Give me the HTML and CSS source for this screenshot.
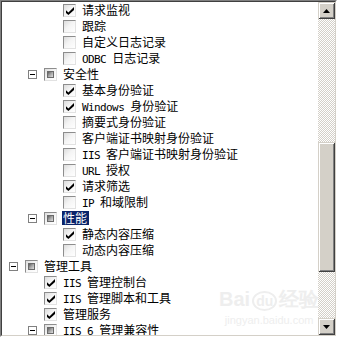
FILE: index.html
```html
<!DOCTYPE html>
<html>
	<head>
		<meta charset="UTF-8">
		<title>角色服务</title>
		<link rel="stylesheet" href="styles.css">
	</head>
	<body>
		<div class="frame">
			<div class="inner">
				<div class="list">
					<div class="row l3"><span class="slot"></span><span class="box on"></span><span class="txt">请求监视</span></div>
					<div class="row l3"><span class="slot"></span><span class="box"></span><span class="txt">跟踪</span></div>
					<div class="row l3"><span class="slot"></span><span class="box"></span><span class="txt">自定义日志记录</span></div>
					<div class="row l3"><span class="slot"></span><span class="box"></span><span class="txt"><span class="en">ODBC </span>日志记录</span></div>
					<div class="row l2"><span class="slot exp"></span><span class="box part"></span><span class="txt">安全性</span></div>
					<div class="row l3"><span class="slot"></span><span class="box on"></span><span class="txt">基本身份验证</span></div>
					<div class="row l3"><span class="slot"></span><span class="box on"></span><span class="txt"><span class="en">Windows </span>身份验证</span></div>
					<div class="row l3"><span class="slot"></span><span class="box"></span><span class="txt">摘要式身份验证</span></div>
					<div class="row l3"><span class="slot"></span><span class="box"></span><span class="txt">客户端证书映射身份验证</span></div>
					<div class="row l3"><span class="slot"></span><span class="box"></span><span class="txt"><span class="en">IIS </span>客户端证书映射身份验证</span></div>
					<div class="row l3"><span class="slot"></span><span class="box"></span><span class="txt"><span class="en">URL </span>授权</span></div>
					<div class="row l3"><span class="slot"></span><span class="box on"></span><span class="txt">请求筛选</span></div>
					<div class="row l3"><span class="slot"></span><span class="box"></span><span class="txt"><span class="en">IP </span>和域限制</span></div>
					<div class="row l2"><span class="slot exp"></span><span class="box part"></span><span class="txt sel">性能</span></div>
					<div class="row l3"><span class="slot"></span><span class="box on"></span><span class="txt">静态内容压缩</span></div>
					<div class="row l3"><span class="slot"></span><span class="box"></span><span class="txt">动态内容压缩</span></div>
					<div class="row"><span class="slot exp"></span><span class="box part"></span><span class="txt">管理工具</span></div>
					<div class="row l2"><span class="slot"></span><span class="box on"></span><span class="txt"><span class="en">IIS </span>管理控制台</span></div>
					<div class="row l2"><span class="slot"></span><span class="box on"></span><span class="txt"><span class="en">IIS </span>管理脚本和工具</span></div>
					<div class="row l2"><span class="slot"></span><span class="box on"></span><span class="txt">管理服务</span></div>
					<div class="row l2"><span class="slot exp"></span><span class="box part"></span><span class="txt"><span class="en">IIS 6 </span>管理兼容性</span></div>
				</div>
				<div class="sb">
					<div class="btn"><svg width="7" height="4" viewBox="0 0 7 4"><polygon points="3.5,0 7,4 0,4" fill="#000"/></svg></div>
					<div class="track"><div class="thumb"></div></div>
					<div class="btn"><svg width="7" height="4" viewBox="0 0 7 4"><polygon points="0,0 7,0 3.5,4" fill="#000"/></svg></div>
				</div>
			</div>
			<div class="mark">
				<div class="mark-logo">Bai<span class="mark-du">du</span>经验</div>
				<div class="mark-url">jingyan.baidu.com</div>
			</div>
		</div>
	</body>
</html>
```

FILE: styles.css
```css
*{
	margin: 0;
	padding: 0;
}
body{
	background: #fff;
	font-family: "Noto Sans CJK SC", sans-serif;
	font-size: 12px;
	color: #000;
}
.frame{
	width: 337px;
	height: 337px;
	box-sizing: border-box;
	border: 1px solid;
	border-color: #808080 #fff #fff #808080;
	position: relative;
	overflow: hidden;
}
.inner{
	height: 100%;
	box-sizing: border-box;
	border: 1px solid;
	border-color: #404040 #d4d0c8 #d4d0c8 #404040;
	display: flex;
	background: #fff;
}
.list{
	flex: 1;
	overflow: hidden;
}
/* 一行 */
.row{
	display: flex;
	align-items: flex-start;
	height: 16px;
	white-space: nowrap;
}
.l2{
	padding-left: 19px;
}
.l3{
	padding-left: 38px;
}
/* 展开按钮位置 */
.slot{
	flex: none;
	width: 9px;
	height: 9px;
	margin: 4px 7px 0 7px;
	box-sizing: border-box;
}
.exp{
	border: 1px solid #808080;
	background: #fff;
	position: relative;
}
.exp::after{
	content: "";
	position: absolute;
	left: 1px;
	top: 3px;
	width: 5px;
	height: 1px;
	background: #000;
}
/* 复选框 */
.box{
	flex: none;
	width: 13px;
	height: 13px;
	margin: 2px 6px 0 0;
	box-sizing: border-box;
	border: 1px solid;
	border-color: #8d8d8d #e2e2e2 #e2e2e2 #8d8d8d;
	background: linear-gradient(135deg, #dcdcdc 0%, #f4f4f4 45%, #fff 100%);
	position: relative;
}
.on::after{
	content: "";
	position: absolute;
	left: 2px;
	top: 2px;
	width: 8px;
	height: 8px;
	background: #000;
	clip-path: polygon(0 40%, 30% 68%, 100% 0, 100% 38%, 30% 100%, 0 76%);
}
.part::after{
	content: "";
	position: absolute;
	left: 2px;
	top: 2px;
	width: 7px;
	height: 7px;
	box-sizing: border-box;
	border: 1px solid #6a6a6a;
	background: linear-gradient(135deg, #5e5e5e 0%, #a8a8a8 50%, #e0e0e0 100%);
}
.txt{
	line-height: 16px;
}
.en{
	font-family: "DejaVu Sans Mono", monospace;
	font-size: 11px;
	letter-spacing: -0.6px;
}
.sel{
	background: #0a246a;
	color: #fff;
	line-height: 14px;
	margin: 1px 0 0 -1px;
	padding: 0 2px 0 1px;
}
/* 滚动条 */
.sb{
	flex: none;
	width: 17px;
	display: flex;
	flex-direction: column;
}
.btn, .thumb{
	background: #d4d0c8;
	box-shadow: inset 1px 1px #d4d0c8, inset -1px -1px #404040, inset 2px 2px #fff, inset -2px -2px #808080;
}
.btn{
	flex: none;
	height: 17px;
	display: flex;
	align-items: center;
	justify-content: center;
}
.btn svg{
	display: block;
}
.track{
	flex: 1;
	background: conic-gradient(#fff 25%, #d4d0c8 0 50%, #fff 0 75%, #d4d0c8 0) 0 0/2px 2px;
}
.thumb{
	margin-top: 123px;
	height: 130px;
}
/* 水印 */
.mark{
	position: absolute;
	left: 218px;
	top: 286px;
	color: #eeeeee;
	font-family: "Liberation Sans", sans-serif;
	text-align: center;
}
.mark-logo{
	font-size: 20px;
	font-weight: bold;
	line-height: 24px;
}
.mark-du{
	font-size: 14px;
	border: 2px solid #eeeeee;
	border-radius: 50%;
	padding: 0 2px;
	margin: 0 2px;
}
.mark-url{
	font-size: 11px;
	line-height: 14px;
}
```
